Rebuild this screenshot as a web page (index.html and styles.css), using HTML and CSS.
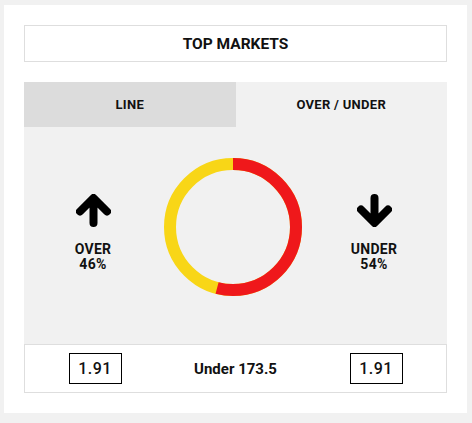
FILE: index.html
```html
<!DOCTYPE html>
<html lang="en">
<head>
  <meta charset="UTF-8">
  <title>Top Markets</title>
  <link rel="stylesheet" href="styles.css">
</head>
<body>
  <div class="card">
    <div class="title">TOP MARKETS</div>

    <div class="tabs">
      <div class="tab tab-off">LINE</div>
      <div class="tab">OVER / UNDER</div>
    </div>

    <div class="panel">
      <div class="side">
        <svg class="arrow" width="35" height="33" viewBox="0 0 35 33">
          <path d="M4 17.5 L17.5 4 L31 17.5 M17.5 5 V29" />
        </svg>
        <div class="side-label">OVER<br>46%</div>
      </div>
      <div class="donut-wrap">
        <svg class="donut" width="140" height="140" viewBox="0 0 140 140">
          <!-- yellow = over, red = under (54%) starting at 12 o'clock -->
          <circle cx="70" cy="70" r="63" fill="none" stroke="#f8d617" stroke-width="12" />
          <circle cx="70" cy="70" r="63" fill="none" stroke="#ef181b" stroke-width="12"
                  stroke-dasharray="213.75 400" transform="rotate(-90 70 70)" />
        </svg>
      </div>
      <div class="side">
        <svg class="arrow" width="35" height="33" viewBox="0 0 35 33">
          <path d="M4 15.5 L17.5 29 L31 15.5 M17.5 4 V28" />
        </svg>
        <div class="side-label">UNDER<br>54%</div>
      </div>
    </div>

    <div class="odds">
      <div class="odds-cell"><span class="price">1.91</span></div>
      <div class="odds-cell line">Under 173.5</div>
      <div class="odds-cell"><span class="price">1.91</span></div>
    </div>
  </div>
</body>
</html>
```

FILE: styles.css
```css
* { margin: 0; padding: 0; box-sizing: border-box; }
body {
  background: #f1f1f1;
  font-family: Roboto, 'Liberation Sans', sans-serif;
  color: #111;
}
.card {
  background: #fff;
  width: 463px;
  margin: 5px 0 0 4px;
  padding: 20px;
}
.title {
  height: 37px;
  border: 1px solid #dedede;
  display: flex;
  justify-content: center;
  align-items: center;
  font-size: 15.5px;
  font-weight: 700;
  margin-bottom: 20px;
}
.tabs {
  display: flex;
  height: 45px;
  background: #f1f1f1;
}
.tab {
  flex: 1;
  display: flex;
  justify-content: center;
  align-items: center;
  font-size: 13px;
  font-weight: 700;
  letter-spacing: 0.3px;
}
.tab-off { background: #dcdcdc; }
.panel {
  background: #f1f1f1;
  display: grid;
  grid-template-columns: 138px 142px 1fr;
  align-items: center;
  padding: 30px 3px 47px 0;
}
.side {
  display: flex;
  flex-direction: column;
  align-items: center;
  margin-top: 12px;
}
.arrow path {
  fill: none;
  stroke: #000;
  stroke-width: 8;
  stroke-linecap: round;
  stroke-linejoin: round;
}
.side-label {
  margin-top: 15px;
  text-align: center;
  font-size: 14px;
  font-weight: 700;
  line-height: 15px;
  letter-spacing: 0.3px;
}
.donut-wrap {
  display: flex;
  justify-content: center;
}
.donut { display: block; }
.odds {
  display: grid;
  grid-template-columns: 140px 1fr 140px;
  align-items: center;
  border: 1px solid #dedede;
  background: #fff;
  padding: 8px 0;
}
.odds-cell {
  display: flex;
  justify-content: center;
  font-size: 15px;
  font-weight: 700;
}
.price {
  display: flex;
  justify-content: center;
  align-items: center;
  width: 53px;
  height: 31px;
  border: 1px solid #000;
  font-weight: 500;
  font-size: 16px;
  letter-spacing: 0.5px;
}
```
